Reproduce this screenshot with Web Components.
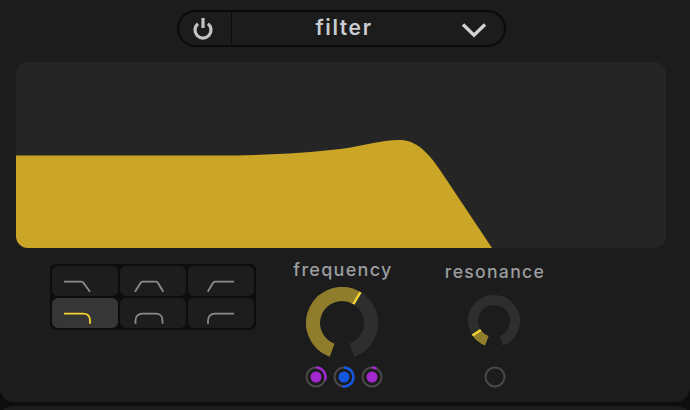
<!DOCTYPE html>
<html>
<head>
<meta charset="utf-8">
<title>filter</title>
<style>
    html, body { margin: 0; height: 100%; overflow: hidden; background: #0d0d0d; }
    body { font-family: "Inter", "Liberation Sans", sans-serif; }
</style>
</head>
<body>
<synth-panel>
    <filter-header slot="header" label="filter"></filter-header>
    <filter-graph slot="graph"></filter-graph>
    <filter-types slot="types" active="3"></filter-types>
    <mod-knob slot="freq" label="frequency" size="72" stroke="14" angle="31" from="-160" label-size="18" gap="6" mods-gap="7" style="--knob-shift: 2px; --mods-shift: 2px">
        <mod-dot color="#a229cf" amount="112"></mod-dot>
        <mod-dot color="#1558e0" amount="190"></mod-dot>
        <mod-dot color="#a229cf" amount="30"></mod-dot>
    </mod-knob>
    <mod-knob slot="res" label="resonance" size="52" stroke="10" angle="-124" from="-160" label-size="17.600" gap="12" mods-gap="19" style="--knob-shift: 2px">
        <mod-dot></mod-dot>
    </mod-knob>
</synth-panel>

<script>
    // Panel: the header, the graph and the row of controls
    class SynthPanel extends HTMLElement {
        constructor() {
            super();
            this.attachShadow({ mode: 'open' });
            this.shadowRoot.innerHTML = `
                <style>
                    :host { display: block; }
                    .panel {
                        height: 402px;
                        box-sizing: border-box;
                        background: #1c1c1c;
                        border-radius: 0 0 14px 14px;
                        padding: 10px 24px 0 16px;
                        display: flex;
                        flex-direction: column;
                        align-items: stretch;
                    }
                    .next {
                        height: 20px;
                        margin-top: 4px;
                        background: #1c1c1c;
                        border-radius: 12px 12px 0 0;
                    }
                    .head { padding: 0 0 15px 161px; }
                    .row { display: flex; align-items: flex-start; padding: 11px 0 0 34px; }
                    .types { padding-top: 5px; }
                    .freq { width: 174px; display: flex; justify-content: center; }
                    .res { width: 130px; display: flex; justify-content: center; padding-top: 2px; }
                </style>
                <div class="panel">
                    <div class="head"><slot name="header"></slot></div>
                    <slot name="graph"></slot>
                    <div class="row">
                        <div class="types"><slot name="types"></slot></div>
                        <div class="freq"><slot name="freq"></slot></div>
                        <div class="res"><slot name="res"></slot></div>
                    </div>
                </div>
                <div class="next"></div>
            `;
        }
    }

    class FilterHeader extends HTMLElement {
        constructor() {
            super();
            this.attachShadow({ mode: 'open' });
            this.shadowRoot.innerHTML = `
                <style>
                    :host { display: block; }
                    .pill {
                        width: 329px;
                        height: 37px;
                        box-sizing: border-box;
                        border: 2px solid #0a0a0a;
                        border-radius: 19px;
                        display: flex;
                        align-items: center;
                        color: #c9ccd0;
                    }
                    .power {
                        width: 53px;
                        height: 100%;
                        box-sizing: border-box;
                        padding-right: 4px;
                        border-right: 1px solid #0a0a0a;
                        display: flex;
                        align-items: center;
                        justify-content: center;
                    }
                    .name {
                        flex: 1;
                        text-align: center;
                        font-size: 21px;
                        font-weight: 600;
                        letter-spacing: 1.6px;
                        line-height: 31px;
                        padding: 0 0 2px 10px;
                    }
                    .drop { width: 58px; box-sizing: border-box; display: flex; justify-content: center; padding: 3px 2px 0 0; }
                    svg { display: block; }
                </style>
                <div class="pill">
                    <div class="power">
                        <svg width="22" height="24" viewBox="0 0 22 24" fill="none" stroke="#c4c4c4" stroke-width="3.200">
                            <path d="M11 1V11"/>
                            <path d="M6 6.800A8 8 0 1 0 16 6.800"/>
                        </svg>
                    </div>
                    <div class="name">${this.getAttribute('label')}</div>
                    <div class="drop">
                        <svg width="26" height="16" viewBox="0 0 26 16" fill="none" stroke="#d2d2d2" stroke-width="3.400">
                            <path d="M2 2.500L13 13.200 24 2.500"/>
                        </svg>
                    </div>
                </div>
            `;
        }
    }

    class FilterGraph extends HTMLElement {
        constructor() {
            super();
            this.attachShadow({ mode: 'open' });
            this.shadowRoot.innerHTML = `
                <style>
                    :host { display: block; }
                    .graph {
                        height: 186px;
                        background: #252525;
                        border-radius: 12px;
                        overflow: hidden;
                    }
                    svg { display: block; }
                </style>
                <div class="graph">
                    <svg width="650" height="186" viewBox="0 0 650 186">
                        <path fill="#cba525" d="M0 93.500H200C250 93.500 290 91 324 87C345 84.500 365 78 383 78C396 78 408 84 424 108L476 186H0Z"/>
                    </svg>
                </div>
            `;
        }
    }

    // Six filter shapes in a 3x2 grid, the active one is yellow. Coordinates are the cell's own
    const SHAPES = [
        'M12 15.700H29.500C30.500 15.700 31 16 31.600 17L38 25.700',
        'M15 25.700L20.500 17C21 16 21.500 15.700 22.500 15.700H36C37 15.700 37.500 16 38 17L43.300 25.700',
        'M19.700 25.700L25 17C25.500 16 26 15.700 27 15.700H46',
        'M12 15.700H31C35.500 15.700 38 18.500 38 22.500V25.700',
        'M15.500 25.700V22.500C15.500 18.500 18 15.700 22.500 15.700H36C40 15.700 42.500 18.500 42.500 22.500V25.700',
        'M20 25.700V22.500C20 18.500 22.500 15.700 27 15.700H46'
    ];

    class FilterTypes extends HTMLElement {
        constructor() {
            super();
            this.attachShadow({ mode: 'open' });
            const active = Number(this.getAttribute('active'));
            const cells = SHAPES.map((d, i) => `
                <div class="cell ${i === active ? 'on' : ''}">
                    <svg width="66" height="30" viewBox="0 0 66 30" fill="none" stroke-width="1.800"><path d="${d}"/></svg>
                </div>`).join('');
            this.shadowRoot.innerHTML = `
                <style>
                    :host { display: block; }
                    .grid {
                        width: 206px;
                        height: 66px;
                        box-sizing: border-box;
                        padding: 2px;
                        background: #0d0d0d;
                        border-radius: 6px;
                        display: grid;
                        grid-template-columns: repeat(3, 1fr);
                        grid-template-rows: repeat(2, 1fr);
                        gap: 2px;
                    }
                    .cell { background: #1d1d1d; border-radius: 6px; }
                    .cell.on { background: #363636; }
                    svg { display: block; stroke: #8c8c8c; }
                    .on svg { stroke: #f5d130; }
                </style>
                <div class="grid">${cells}</div>
            `;
        }
    }

    function polar(c, r, deg) {
        const a = (deg - 90) * Math.PI / 180;
        return [c + r * Math.cos(a), c + r * Math.sin(a)];
    }

    function arc(c, r, from, to) {
        const [x1, y1] = polar(c, r, from);
        const [x2, y2] = polar(c, r, to);
        const large = to - from > 180 ? 1 : 0;
        return `M${x1.toFixed(2)} ${y1.toFixed(2)}A${r} ${r} 0 ${large} 1 ${x2.toFixed(2)} ${y2.toFixed(2)}`;
    }

    class ModKnob extends HTMLElement {
        constructor() {
            super();
            this.attachShadow({ mode: 'open' });
            const size = Number(this.getAttribute('size'));
            const stroke = Number(this.getAttribute('stroke'));
            const angle = Number(this.getAttribute('angle'));
            const from = Number(this.getAttribute('from'));
            const c = size / 2;
            const r = c - stroke / 2;
            const [tx1, ty1] = polar(c, r - stroke / 2, angle);
            const [tx2, ty2] = polar(c, r + stroke / 2, angle);
            this.shadowRoot.innerHTML = `
                <style>
                    :host { display: block; }
                    .knob { display: flex; flex-direction: column; align-items: center; }
                    .label {
                        color: #9b9da0;
                        font-size: ${this.getAttribute('label-size')}px;
                        font-weight: 500;
                        letter-spacing: 1.3px;
                        line-height: 22px;
                        margin-bottom: ${this.getAttribute('gap')}px;
                    }
                    svg { display: block; margin-right: var(--knob-shift, 0); }
                    .mods { display: flex; gap: 6px; margin-top: ${this.getAttribute('mods-gap')}px; margin-left: var(--mods-shift, 0); }
                </style>
                <div class="knob">
                    <div class="label">${this.getAttribute('label')}</div>
                    <svg width="${size}" height="${size}" viewBox="0 0 ${size} ${size}" fill="none" stroke-width="${stroke}">
                        <path d="${arc(c, r, from, 160)}" stroke="#2e2e2e"/>
                        <path d="${arc(c, r, from, angle)}" stroke="#8f7d2c"/>
                        <path d="M${tx1} ${ty1}L${tx2} ${ty2}" stroke="#f2d335" stroke-width="2.500"/>
                    </svg>
                    <div class="mods"><slot></slot></div>
                </div>
            `;
        }
    }

    class ModDot extends HTMLElement {
        constructor() {
            super();
            this.attachShadow({ mode: 'open' });
            const color = this.getAttribute('color');
            const amount = Number(this.getAttribute('amount'));
            const extra = color ? `
                <circle cx="11" cy="11" r="5.500" fill="${color}"/>
                <path d="${arc(11, 9.5, 0, amount)}" fill="none" stroke="${color}" stroke-width="2.500"/>` : '';
            this.shadowRoot.innerHTML = `
                <style>
                    :host { display: block; }
                    svg { display: block; }
                </style>
                <svg width="22" height="22" viewBox="0 0 22 22">
                    <circle cx="11" cy="11" r="9.500" fill="none" stroke="#4a4a4a" stroke-width="2"/>
                    ${extra}
                </svg>
            `;
        }
    }

    customElements.define('synth-panel', SynthPanel);
    customElements.define('filter-header', FilterHeader);
    customElements.define('filter-graph', FilterGraph);
    customElements.define('filter-types', FilterTypes);
    customElements.define('mod-knob', ModKnob);
    customElements.define('mod-dot', ModDot);
</script>
</body>
</html>
